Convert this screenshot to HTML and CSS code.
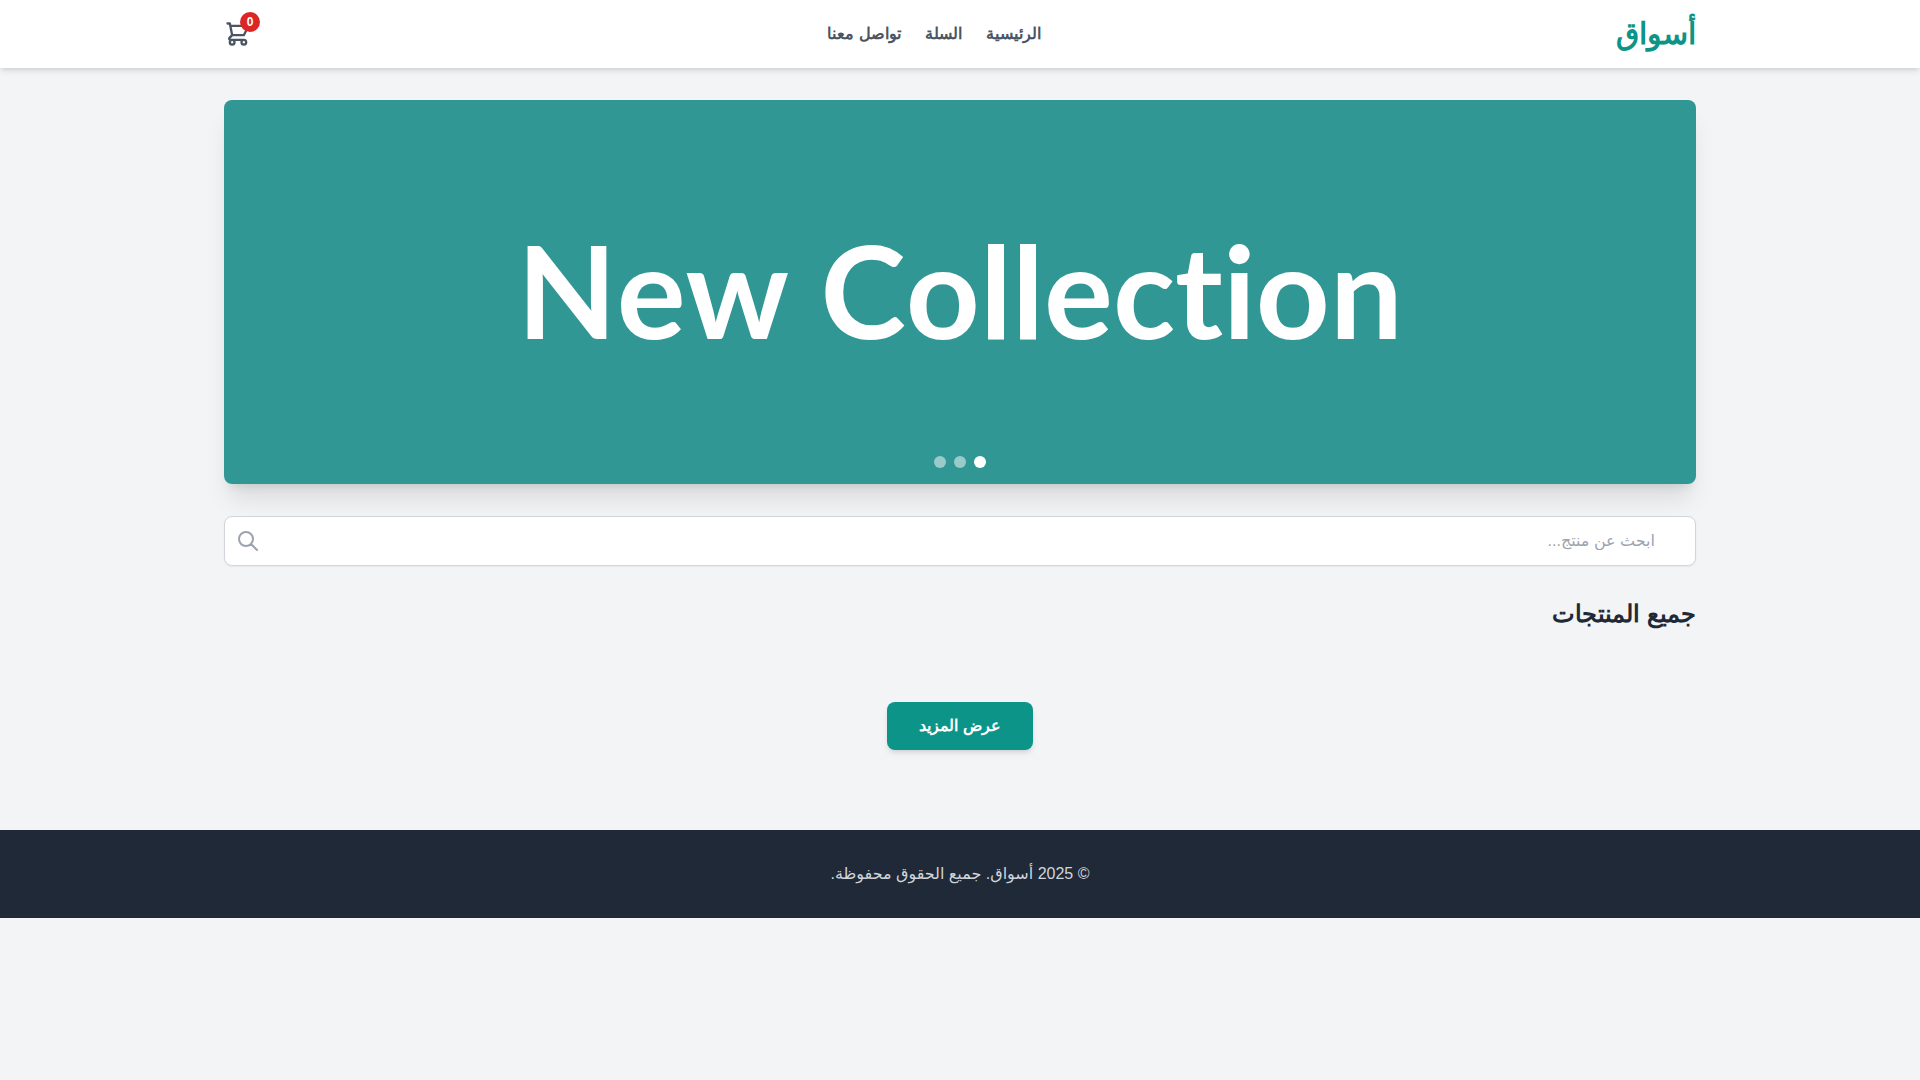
FILE: index.html
```html
<!DOCTYPE html>
<html lang="ar" dir="rtl">
<head>
    <meta charset="UTF-8">
    <meta name="viewport" content="width=device-width, initial-scale=1.0">
    <title>أسواق</title>
    <link rel="stylesheet" href="styles.css">
</head>
<body>
    <header class="site-header">
        <div class="container header-row">
            <a href="#" class="logo">أسواق</a>
            <nav class="main-nav">
                <a href="#">الرئيسية</a>
                <a href="#cart">السلة</a>
                <a href="#contact">تواصل معنا</a>
            </nav>
            <a href="#cart" class="cart-link" aria-label="السلة">
                <svg viewBox="0 0 24 24" fill="none" stroke="currentColor" stroke-width="2" stroke-linecap="round" stroke-linejoin="round">
                    <path d="M3 3h2l.4 2M7 13h10l4-8H5.4M7 13L5.4 5M7 13l-2.293 2.293c-.63.63-.184 1.707.707 1.707H17m0 0a2 2 0 100 4 2 2 0 000-4zm-8 2a2 2 0 11-4 0 2 2 0 014 0z"/>
                </svg>
                <span class="cart-count">0</span>
            </a>
        </div>
    </header>

    <main class="container">
        <!-- Slider -->
        <section class="slider">
            <div class="slide" lang="en" dir="ltr">New Collection</div>
            <div class="dots">
                <button type="button" class="dot active" aria-label="1"></button>
                <button type="button" class="dot" aria-label="2"></button>
                <button type="button" class="dot" aria-label="3"></button>
            </div>
        </section>

        <!-- Search -->
        <div class="search">
            <input type="text" id="searchInput" aria-label="ابحث عن منتج" placeholder="ابحث عن منتج...">
            <svg viewBox="0 0 24 24" fill="none" stroke="currentColor" stroke-width="2" stroke-linecap="round" stroke-linejoin="round">
                <path d="M21 21l-6-6m2-5a7 7 0 11-14 0 7 7 0 0114 0z"/>
            </svg>
        </div>

        <!-- Products -->
        <h2>جميع المنتجات</h2>
        <div class="product-grid" id="productGrid"></div>

        <div class="load-more">
            <button type="button" id="loadMoreButton">عرض المزيد</button>
        </div>
    </main>

    <footer class="site-footer">
        <p>© 2025 أسواق. جميع الحقوق محفوظة.</p>
    </footer>
</body>
</html>
```
FILE: styles.css
```css
* {
    box-sizing: border-box;
}

body {
    margin: 0;
    font-family: 'Liberation Sans', sans-serif;
    font-size: 16px;
    line-height: 24px;
    color: #1f2937;
    background-color: #f3f4f6;
}

a {
    color: inherit;
    text-decoration: none;
}

.container {
    width: 100%;
    max-width: 1536px;
    margin: 0 auto;
    padding: 32px;
}

/* Header */
.site-header {
    position: sticky;
    top: 0;
    z-index: 10;
    background-color: #ffffff;
    box-shadow: 0 4px 6px -1px rgba(0, 0, 0, 0.1), 0 2px 4px -2px rgba(0, 0, 0, 0.1);
}

.header-row {
    display: flex;
    align-items: center;
    justify-content: space-between;
    padding: 16px 32px;
}

.logo {
    font-size: 30px;
    line-height: 36px;
    font-weight: bold;
    color: #0d9488;
}

.main-nav {
    display: flex;
    gap: 24px;
    font-weight: 600;
    color: #4b5563;
}

.main-nav a:hover,
.cart-link:hover {
    color: #0d9488;
}

.cart-link {
    position: relative;
    color: #4b5563;
}

.cart-link svg {
    display: block;
    width: 28px;
    height: 28px;
}

.cart-count {
    position: absolute;
    top: -8px;
    right: -8px;
    display: flex;
    align-items: center;
    justify-content: center;
    width: 20px;
    height: 20px;
    border-radius: 50%;
    background-color: #dc2626;
    color: #ffffff;
    font-size: 12px;
    line-height: 16px;
    font-weight: bold;
}

/* Slider */
.slider {
    position: relative;
    margin-bottom: 32px;
    border-radius: 8px;
    box-shadow: 0 20px 25px -5px rgba(0, 0, 0, 0.1), 0 8px 10px -6px rgba(0, 0, 0, 0.1);
}

.slide {
    display: flex;
    align-items: center;
    justify-content: center;
    height: 384px;
    padding-bottom: 6px;
    border-radius: 8px;
    background-color: #319795;
    color: #ffffff;
    font-family: Lato, sans-serif;
    font-size: 129px;
    line-height: 156px;
    font-weight: bold;
    font-kerning: none;
    font-variant-ligatures: none;
}

.dots {
    position: absolute;
    bottom: 16px;
    left: 0;
    right: 0;
    display: flex;
    justify-content: center;
    gap: 8px;
}

.dot {
    width: 12px;
    height: 12px;
    padding: 0;
    border: none;
    border-radius: 50%;
    background-color: #ffffff;
    opacity: 0.5;
    cursor: pointer;
}

.dot.active {
    opacity: 1;
}

/* Search */
.search {
    position: relative;
    margin-bottom: 32px;
}

.search input {
    display: block;
    width: 100%;
    height: 50px;
    padding: 12px 40px;
    border: 1px solid #d1d5db;
    border-radius: 8px;
    background-color: #ffffff;
    font: inherit;
    font-family: 'Liberation Sans', 'DejaVu Sans', sans-serif;
    color: inherit;
    box-shadow: 0 1px 2px rgba(0, 0, 0, 0.05);
}

.search input::placeholder {
    color: #9ca3af;
}

.search svg {
    position: absolute;
    top: 13px;
    left: 12px;
    width: 24px;
    height: 24px;
    color: #9ca3af;
}

/* Products */
h2 {
    margin: 0 0 24px;
    font-size: 24px;
    line-height: 32px;
}

.product-grid {
    display: grid;
    grid-template-columns: repeat(4, 1fr);
    gap: 24px;
}

.load-more {
    margin-top: 48px;
    text-align: center;
}

.load-more button {
    padding: 12px 32px;
    border: none;
    border-radius: 8px;
    background-color: #0d9488;
    color: #ffffff;
    font: inherit;
    font-weight: bold;
    cursor: pointer;
    box-shadow: 0 4px 6px -1px rgba(0, 0, 0, 0.1), 0 2px 4px -2px rgba(0, 0, 0, 0.1);
}

.load-more button:hover {
    background-color: #0f766e;
}

/* Footer */
.site-footer {
    margin-top: 48px;
    padding: 32px;
    background-color: #1f2937;
    color: #d1d5db;
    font-family: 'Liberation Sans', 'DejaVu Sans', sans-serif;
    text-align: center;
}

.site-footer p {
    margin: 0;
}
```
